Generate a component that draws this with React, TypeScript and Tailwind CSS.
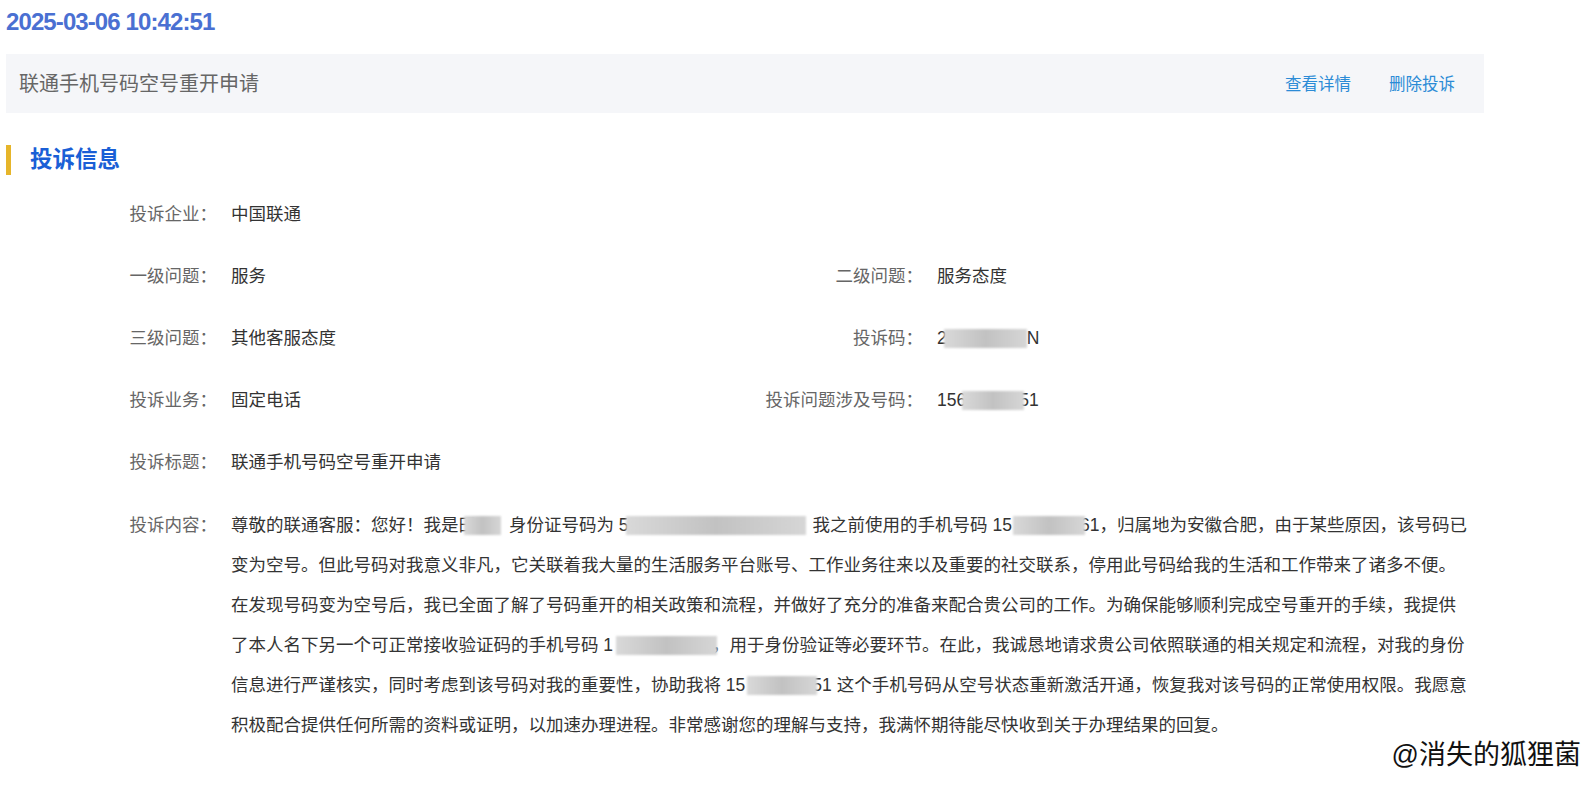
import React from 'react'

const FONT = '"Liberation Sans", "Noto Sans CJK SC", sans-serif'

function Blur({ className = '' }: { className?: string }) {
  return (
    <span
      className={`relative z-10 inline-block h-[19px] align-[-4px] bg-gradient-to-r from-[#d9d9d9] via-[#c2c2c2] to-[#d6d6d6] blur-[1.2px] ${className}`}
    />
  )
}

function Field({ label, children }: { label: string; children: React.ReactNode }) {
  return (
    <>
      <div className="w-[217px] shrink-0 text-right text-[#666]">{label}</div>
      <div className="ml-[14px] whitespace-nowrap text-[#333]">{children}</div>
    </>
  )
}

export default function App() {
  return (
    <div className="relative h-[786px] w-[1594px] overflow-hidden bg-white" style={{ fontFamily: FONT }}>
      {/* time */}
      <div className="pl-[6px] pt-[8px] text-[24px] font-bold leading-[28px] tracking-[-0.9px] text-[#4a70d2]">
        2025-03-06 10:42:51
      </div>

      {/* title bar */}
      <div className="ml-[6px] mt-[18px] flex h-[59px] w-[1478px] items-center justify-between bg-[#f5f6f9] pl-[13px] pr-[29px]">
        <span className="text-[20px] text-[#666]">联通手机号码空号重开申请</span>
        <div className="flex gap-[38px] pt-[2px] text-[16.5px] text-[#2b8bd6]">
          <span>查看详情</span>
          <span>删除投诉</span>
        </div>
      </div>

      {/* section header */}
      <div className="mt-[32px] flex h-[30px] items-center">
        <div className="ml-[6px] h-[30px] w-[5px] bg-[#e6b52a]" />
        <h2 className="ml-[19px] text-[22.5px] font-bold text-[#1a5fd6]">投诉信息</h2>
      </div>

      <div className="mt-[8px] text-[17.5px]">
        <div className="flex h-[62px] items-center">
          <Field label="投诉企业：">中国联通</Field>
        </div>
        <div className="flex h-[62px] items-center">
          <div className="flex w-[706px] shrink-0">
            <Field label="一级问题：">服务</Field>
          </div>
          <Field label="二级问题：">服务态度</Field>
        </div>
        <div className="flex h-[62px] items-center">
          <div className="flex w-[706px] shrink-0">
            <Field label="三级问题：">其他客服态度</Field>
          </div>
          <Field label="投诉码：">
            2<Blur className="-ml-[3px] w-[83px]" />N
          </Field>
        </div>
        <div className="flex h-[62px] items-center">
          <div className="flex w-[706px] shrink-0">
            <Field label="投诉业务：">固定电话</Field>
          </div>
          <Field label="投诉问题涉及号码：">
            156<Blur className="-ml-[4px] w-[62px]" />
            <span className="-ml-[5px]">51</span>
          </Field>
        </div>
        <div className="flex h-[62px] items-center">
          <Field label="投诉标题：">联通手机号码空号重开申请</Field>
        </div>

        {/* content */}
        <div className="mt-[12px] flex leading-[40px]">
          <Field label="投诉内容：">
            <div>
              尊敬的联通客服：您好！我是田<Blur className="-ml-[12px] w-[37px]" />
              <span className="ml-[8px]">身份证号码为 5</span>
              <Blur className="-ml-[3px] w-[180px]" />
              <span className="ml-[7px]">我之前使用的手机号码 15</span>
              <Blur className="ml-[1px] w-[72px]" />
              <span className="-ml-[5px]">61，归属地为安徽合肥，由于某些原因，该号码已</span>
            </div>
            <div>变为空号。但此号码对我意义非凡，它关联着我大量的生活服务平台账号、工作业务往来以及重要的社交联系，停用此号码给我的生活和工作带来了诸多不便。</div>
            <div>在发现号码变为空号后，我已全面了解了号码重开的相关政策和流程，并做好了充分的准备来配合贵公司的工作。为确保能够顺利完成空号重开的手续，我提供</div>
            <div>
              了本人名下另一个可正常接收验证码的手机号码 1<Blur className="ml-[3px] w-[101px]" />
              <span className="-ml-[5px]">，用于身份验证等必要环节。在此，我诚恳地请求贵公司依照联通的相关规定和流程，对我的身份</span>
            </div>
            <div>
              信息进行严谨核实，同时考虑到该号码对我的重要性，协助我将 15<Blur className="ml-[2px] w-[70px]" />
              <span className="-ml-[5px]">51 这个手机号码从空号状态重新激活开通，恢复我对该号码的正常使用权限。我愿意</span>
            </div>
            <div>积极配合提供任何所需的资料或证明，以加速办理进程。非常感谢您的理解与支持，我满怀期待能尽快收到关于办理结果的回复。</div>
          </Field>
        </div>
      </div>

      {/* watermark */}
      <div className="absolute right-[13px] top-[742px] text-[27px] leading-none text-[#111]">@消失的狐狸菌</div>
    </div>
  )
}
